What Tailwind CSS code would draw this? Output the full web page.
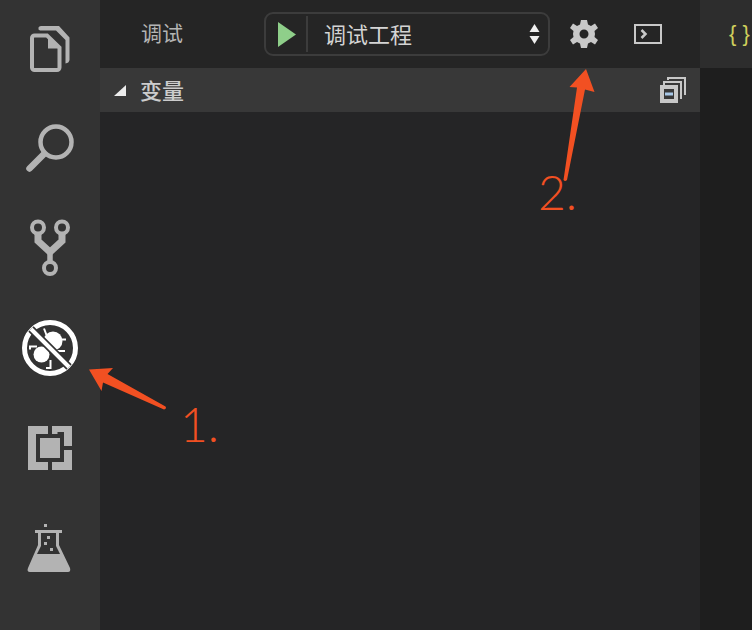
<!DOCTYPE html>
<html lang="zh">
<head>
<meta charset="utf-8">
<script src="https://cdn.jsdelivr.net/npm/@tailwindcss/browser@4"></script>
</head>
<body class="m-0 bg-[#1e1e1e]">
<div class="relative flex w-[752px] h-[630px] overflow-hidden font-['Noto_Sans_CJK_SC','Noto_Sans',sans-serif]">
  <!-- activity bar -->
  <nav class="flex flex-col w-[100px] shrink-0 bg-[#333333]">
    <svg class="block w-[100px] h-[100px]" viewBox="0 0 100 100" fill="none">
      <path d="M47 35.500H34.500A2.500 2.500 0 0 0 32 38V67.500A2.500 2.500 0 0 0 34.500 70H57A2.500 2.500 0 0 0 59.500 67.500V47.500Z" stroke="#b3b3b3" stroke-width="4"/>
      <path d="M48 36L60 47.500V48.500H48Z" fill="#b3b3b3"/>
      <path d="M38.500 29.500V27.500Q39 26 41 26H59L69.500 37.500V60Q69 63 65.500 63.500V40L56 30.500H40Z" fill="#b3b3b3"/>
    </svg>
    <svg class="block w-[100px] h-[100px]" viewBox="0 0 100 100" fill="none">
      <circle cx="56" cy="42" r="15.500" stroke="#b3b3b3" stroke-width="4.500"/>
      <path d="M44 54L29.500 68.500" stroke="#b3b3b3" stroke-width="6.500" stroke-linecap="round"/>
    </svg>
    <svg class="block w-[100px] h-[100px]" viewBox="0 0 100 100" fill="none" stroke="#b3b3b3">
      <circle cx="38" cy="27.500" r="6" stroke-width="4"/>
      <circle cx="62" cy="27.500" r="6" stroke-width="4"/>
      <circle cx="50" cy="68" r="6" stroke-width="4"/>
      <path d="M38 33V41L50 52L62 41V33" stroke-width="7"/>
      <path d="M50 50V62" stroke-width="5.500"/>
    </svg>
    <svg class="block w-[100px] h-[100px]" viewBox="0 0 100 100" fill="none">
      <circle cx="50" cy="48" r="25.500" stroke="#ffffff" stroke-width="5"/>
      <circle cx="41.500" cy="54.500" r="8" fill="#ffffff"/>
      <circle cx="53" cy="41" r="9.500" fill="#ffffff"/>
      <path d="M44 28.500L46.500 35M57 33L56 39M66 39.500H58M65 51H57M30 49.500V46.500H37M50.500 60V68H46" stroke="#ffffff" stroke-width="2"/>
      <path d="M31 29L69 67" stroke="#333333" stroke-width="7.500"/>
      <path d="M31 29L69 67" stroke="#ffffff" stroke-width="4"/>
    </svg>
    <svg class="block w-[100px] h-[100px]" viewBox="0 0 100 100" fill="#b3b3b3">
      <path d="M28 26H48V34H36V62H48V70H28Z"/>
      <rect x="40" y="38" width="20" height="20"/>
      <path d="M52 26H72V46H64V32H57.500V34H52Z"/>
      <path d="M64 50H72V70H52V62H64Z"/>
    </svg>
    <svg class="block w-[100px] h-[100px]" viewBox="0 0 100 100" fill="#b3b3b3">
      <rect x="44" y="24" width="3" height="3"/>
      <rect x="35" y="30" width="27" height="3"/>
      <rect x="47" y="36" width="3" height="3"/>
      <rect x="44" y="42" width="3" height="3"/>
      <rect x="50" y="48" width="3" height="3"/>
      <path d="M38 33H41V46L37 54H60L56 46V33H59V45L70 68Q71 72 68 72H30Q26.500 72 28 68L38 45Z"/>
    </svg>
  </nav>

  <!-- sidebar -->
  <aside class="flex flex-col w-[600px] shrink-0 bg-[#252526]">
    <header class="relative flex items-center h-[68px] shrink-0 bg-[#252525]">
      <span class="ml-[41px] mb-[3px] w-[123px] text-[21px] leading-none text-[#b4b4b4]">调试</span>
      <div class="flex items-center w-[286px] h-[44px] rounded-[9px] border-2 border-[#3c3c3c]">
        <svg class="ml-[12px] w-[18px] h-[25px]" viewBox="0 0 18 25"><path d="M0 0L18 12.500L0 25Z" fill="#8fcf8a"/></svg>
        <span class="ml-[10px] w-[2px] h-[36px] bg-[#3c3c3c]"></span>
        <span class="ml-[16px] mb-[3px] flex-1 text-[22px] leading-none text-[#d4d4d4]">调试工程</span>
        <svg class="mr-[8px] w-[11px] h-[20px]" viewBox="0 0 11 20"><path d="M5.500 0L10.500 8H.5ZM.5 12H10.500L5.500 20Z" fill="#f0f0f0"/></svg>
      </div>
      <svg class="ml-[18px] w-[32px] h-[32px]" viewBox="0 0 32 32" fill="#c8c8c8">
        <path fill-rule="evenodd" d="M13 2H19L20 6.500L23 8L27 5.500L30 10L26.500 13L27 16L26.500 19L30 22L27 26.500L23 24L20 25.500L19 30H13L12 25.500L9 24L5 26.500L2 22L5.500 19L5 16L5.500 13L2 10L5 5.500L9 8L12 6.500ZM16 11.500A4.500 4.500 0 1 0 16 20.500A4.500 4.500 0 1 0 16 11.500Z"/>
      </svg>
      <svg class="ml-[33px] w-[30px] h-[22px]" viewBox="0 0 30 22" fill="none" stroke="#c8c8c8">
        <rect x="2" y="2" width="26" height="18" stroke-width="2"/>
        <path d="M8.500 7L12.500 11L8.500 15" stroke-width="2.500"/>
      </svg>
    </header>
    <section class="relative flex items-center h-[44px] shrink-0 bg-[#383838]">
      <svg class="ml-[14px] w-[12px] h-[11px]" viewBox="0 0 12 11"><path d="M12 0V11H0Z" fill="#ececec"/></svg>
      <span class="ml-[14px] mb-[3px] flex-1 text-[22px] leading-none font-medium text-[#cccccc]">变量</span>
      <svg class="mr-[14px] w-[26px] h-[26px]" viewBox="0 0 26 26" fill="none">
        <path d="M8 3V1H25V18" stroke="#c8c8c8" stroke-width="2"/>
        <path d="M4 8V5H21V22" stroke="#c8c8c8" stroke-width="2"/>
        <rect x="2" y="10" width="14" height="14" stroke="#c8c8c8" stroke-width="4"/>
        <rect x="5" y="15.500" width="8" height="3" fill="#a8c8e8"/>
      </svg>
    </section>
    <div class="flex-1"></div>
  </aside>

  <!-- editor -->
  <main class="flex-1 bg-[#1e1e1e]">
    <div class="flex items-center h-[68px] pl-[29px] bg-[#2d2d2d]">
      <span class="mb-[1px] text-[22px] leading-none whitespace-pre font-normal font-['Liberation_Sans',sans-serif] text-[#cfcf5c]">{ }</span>
    </div>
  </main>

  <!-- annotations -->
  <svg class="absolute left-0 top-0 w-[752px] h-[630px] pointer-events-none" viewBox="0 0 752 630">
    <path d="M89 369.500L113 368L107.500 374L165.500 406.500Q167 408.500 164 409.500L103 382.500L101.500 391Z" fill="#f25022"/>
    <path d="M586 69L594.500 92L585 89.500L567 180Q565 182 563.500 180L577 87.500L569.500 87Z" fill="#f25022"/>
  </svg>
  <span class="absolute left-[180px] top-[397px] text-[48px] leading-[54px] font-light font-['Lato',sans-serif] text-[#f25022]">1.</span>
  <span class="absolute left-[538px] top-[165px] text-[48px] leading-[54px] font-light font-['Lato',sans-serif] text-[#f25022]">2.</span>
</div>
</body>
</html>
